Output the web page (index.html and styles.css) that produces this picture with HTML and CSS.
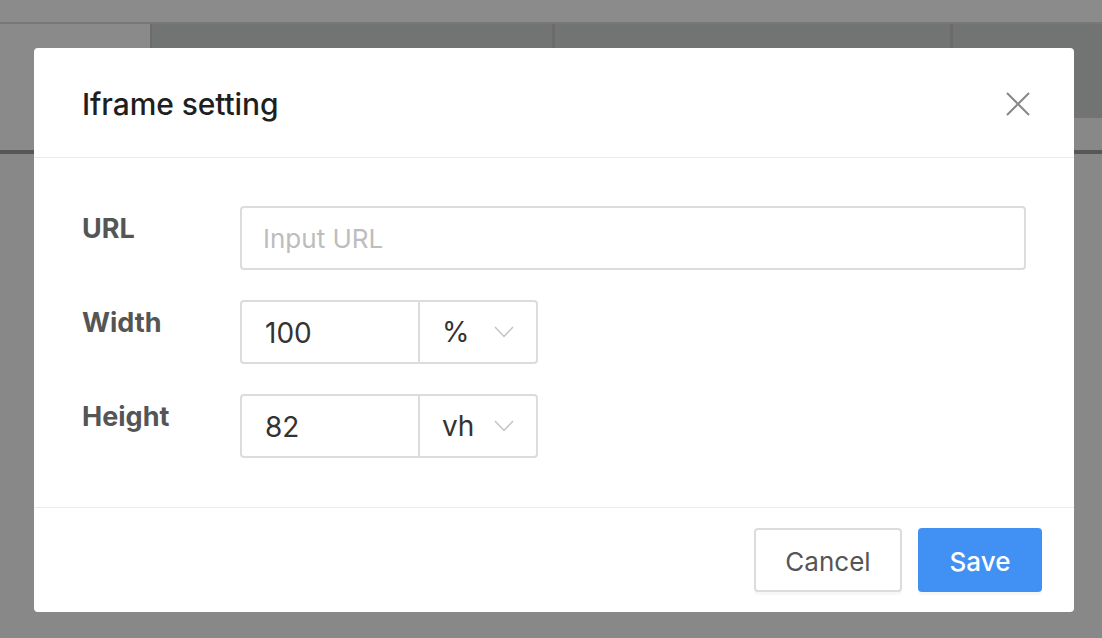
FILE: index.html
```html
<!DOCTYPE html>
<html>
<head>
<meta charset="utf-8">
<link rel="stylesheet" href="styles.css">
</head>
<body>
<div class="page">
  <div class="topbar"></div>
  <div class="toolbar">
    <div class="cell cell-light"></div>
    <div class="cell cell-dark c1"></div>
    <div class="cell cell-dark c2"></div>
    <div class="cell cell-dark c3"></div>
  </div>
  <div class="rule"></div>
</div>

<div class="modal">
  <div class="modal-header">
    <div class="modal-title">Iframe setting</div>
    <button class="close" aria-label="Close">
      <svg width="24" height="24" viewBox="0 0 24 24"><path d="M1 1L23 23M23 1L1 23" stroke="#888" stroke-width="2" fill="none"/></svg>
    </button>
  </div>
  <div class="modal-body">
    <div class="row">
      <div class="label">URL</div>
      <div class="field url"><span class="placeholder">Input URL</span></div>
    </div>
    <div class="row">
      <div class="label">Width</div>
      <div class="group">
        <div class="num">100</div>
        <div class="select"><span>%</span>
          <svg class="chev" width="20" height="12" viewBox="0 0 20 12"><path d="M1 1L10 10.5L19 1" stroke="#c4c4c4" stroke-width="1.5" fill="none"/></svg>
        </div>
      </div>
    </div>
    <div class="row">
      <div class="label">Height</div>
      <div class="group">
        <div class="num">82</div>
        <div class="select"><span>vh</span>
          <svg class="chev" width="20" height="12" viewBox="0 0 20 12"><path d="M1 1L10 10.5L19 1" stroke="#c4c4c4" stroke-width="1.5" fill="none"/></svg>
        </div>
      </div>
    </div>
  </div>
  <div class="modal-footer">
    <button class="btn btn-cancel">Cancel</button>
    <button class="btn btn-save">Save</button>
  </div>
</div>
</body>
</html>
```
FILE: styles.css
```css
* { box-sizing: border-box; }
html, body { margin: 0; padding: 0; }
body {
  width: 1102px;
  height: 638px;
  overflow: hidden;
  background: #888888;
  font-family: Inter, "Liberation Sans", sans-serif;
  position: relative;
}
.page { width: 100%; }
.topbar {
  height: 24px;
  background: #8b8b8b;
  border-bottom: 2px solid #787878;
}
.toolbar {
  display: flex;
  height: 126px;
}
.cell { height: 100%; }
.cell-light { width: 150px; background: #8a8a8a; }
.cell-dark { background: #727473; height: 94px; }
.c1 { width: 402px; border-left: 2px solid #6c6c6c; }
.c2 { width: 398px; border-left: 3px solid #6a6b6a; }
.c3 { flex: 1; border-left: 3px solid #6a6b6a; }
.rule {
  height: 4px;
  background: #575757;
}

.modal {
  position: absolute;
  left: 34px;
  top: 48px;
  width: 1040px;
  height: 564px;
  background: #fff;
  border-radius: 4px;
  display: flex;
  flex-direction: column;
}
.modal-header {
  height: 110px;
  border-bottom: 1px solid #ebebeb;
  display: flex;
  align-items: center;
  justify-content: space-between;
  padding: 2px 44px 0 48px;
}
.modal-title {
  font-size: 30px;
  color: #1f1f1f;
  font-weight: 500;
  letter-spacing: -0.1px;
}
.close {
  border: 0;
  background: none;
  padding: 0;
  width: 24px;
  height: 24px;
  display: block;
}
.close svg { display: block; }

.modal-body {
  flex: 1;
  padding: 48px 48px 0 48px;
  display: flex;
  flex-direction: column;
  gap: 30px;
}
.row {
  display: flex;
  align-items: flex-start;
}
.label {
  width: 158px;
  font-size: 27px;
  font-weight: 700;
  color: #555;
  line-height: 36px;
  padding-top: 5px;
}
.field, .group {
  height: 64px;
  border: 2px solid #dcdcdc;
  border-radius: 4px;
}
.field {
  flex: 1;
  display: flex;
  align-items: center;
  padding-left: 21px;
}
.placeholder {
  font-size: 26px;
  color: #bdbdbd;
}
.group {
  width: 298px;
  display: flex;
}
.num {
  width: 178px;
  border-right: 2px solid #dcdcdc;
  display: flex;
  align-items: center;
  padding-left: 23px;
  padding-top: 2px;
  font-size: 28px;
  color: #333;
}
.select {
  flex: 1;
  display: flex;
  align-items: center;
  justify-content: space-between;
  padding: 0 22px 0 22px;
  font-size: 28px;
  color: #333;
}
.chev { display: block; }

.modal-footer {
  height: 105px;
  border-top: 1px solid #ebebeb;
  display: flex;
  justify-content: flex-end;
  align-items: flex-start;
  padding: 20px 32px 0 0;
  gap: 16px;
}
.btn {
  height: 64px;
  border-radius: 4px;
  font-family: Inter, "Liberation Sans", sans-serif;
  font-size: 26px;
  box-shadow: 0 3px 0 rgba(0,0,0,0.03);
  cursor: pointer;
  padding: 2px 0 0 0;
}
.btn-cancel {
  width: 148px;
  background: #fff;
  border: 2px solid #dcdcdc;
  color: #555;
}
.btn-save {
  width: 124px;
  background: #4191f5;
  border: 0;
  color: #fff;
  font-weight: 500;
}
```
